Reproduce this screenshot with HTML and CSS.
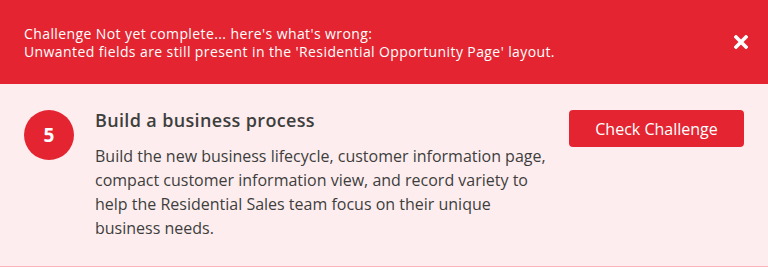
FILE: index.html
```html
<!DOCTYPE html>
<html>
<head>
<meta charset="utf-8">
<link rel="stylesheet" href="styles.css">
</head>
<body>
<div class="page">
  <div class="banner">
    <div class="banner-text">
      <div>Challenge Not yet complete... here's what's wrong:</div>
      <div>Unwanted fields are still present in the 'Residential Opportunity Page' layout.</div>
    </div>
    <button class="close" aria-label="Close">
      <svg width="14" height="14" viewBox="0 0 14 14"><path d="M2 2 L12 12 M12 2 L2 12" stroke="#fff" stroke-width="3.6" stroke-linecap="square"/></svg>
    </button>
  </div>
  <div class="step">
    <div class="num">5</div>
    <div class="content">
      <h2 class="title">Build a business process</h2>
      <p class="desc">Build the new business lifecycle, customer information page, compact customer information view, and record variety to help the Residential Sales team focus on their unique business needs.</p>
    </div>
    <button class="check">Check Challenge</button>
  </div>
</div>
</body>
</html>
```
FILE: styles.css
```css
html, body {
  margin: 0;
  padding: 0;
}
body {
  width: 768px;
  height: 267px;
  overflow: hidden;
  background: #fdedef;
  font-family: "Open Sans", "Lato", sans-serif;
}
.page {
  display: flex;
  flex-direction: column;
  height: 267px;
  box-sizing: border-box;
  border-bottom: 1px solid #fdb4b9;
}
.banner {
  background: #e42531;
  height: 84px;
  display: flex;
  align-items: center;
  padding: 0 20px 0 24px;
  box-sizing: border-box;
  color: #fff;
}
.banner-text {
  flex: 1;
  font-size: 14px;
  line-height: 18px;
  letter-spacing: 0.4px;
  padding-top: 2px;
}
.close {
  background: none;
  border: 0;
  padding: 0;
  width: 14px;
  height: 14px;
  display: flex;
  cursor: pointer;
}
.step {
  flex: 1;
  display: flex;
  align-items: flex-start;
  padding: 26px 24px 0 24px;
}
.num {
  width: 50px;
  height: 50px;
  border-radius: 50%;
  background: #e42531;
  color: #fff;
  font-weight: 700;
  font-size: 19px;
  display: flex;
  align-items: center;
  justify-content: center;
  flex: none;
}
.content {
  flex: 1;
  margin-left: 21px;
}
.title {
  margin: -2px 0 0 0;
  font-size: 18px;
  font-weight: 600;
  letter-spacing: 0.35px;
  color: #3e3e3c;
  line-height: 24px;
}
.desc {
  margin: 12px 0 0 0;
  font-size: 16px;
  line-height: 24px;
  color: #3e3e3c;
  width: 456px;
}
.check {
  flex: none;
  width: 175px;
  height: 37px;
  background: #e42531;
  color: #fff;
  border: 0;
  border-radius: 4px;
  font-family: inherit;
  font-size: 16px;
  margin-top: 0;
}
```
